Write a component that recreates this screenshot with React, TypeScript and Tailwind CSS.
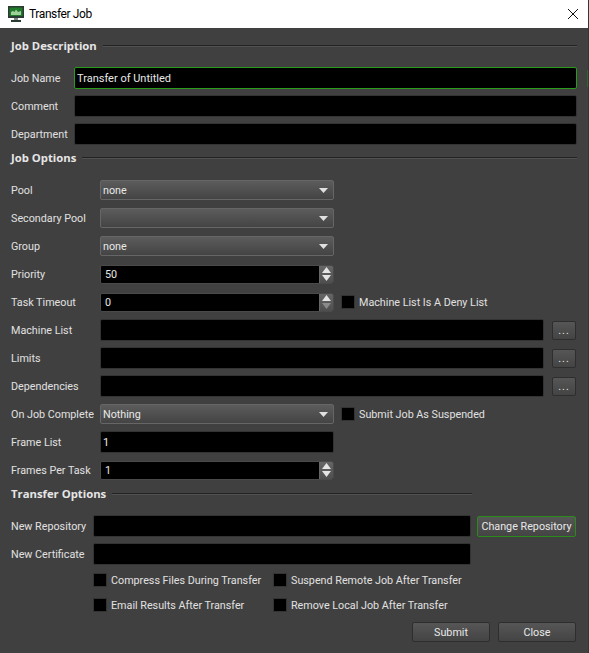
import React from "react";

function SectionHeading({ title, lineClass = "" }: { title: string; lineClass?: string }) {
  return (
    <div className="flex h-5 items-center">
      <span className="font-['Open_Sans',sans-serif] text-[11.3px] font-bold text-[#e6e6e6] whitespace-nowrap">{title}</span>
      <div className={`ml-[6px] h-[2px] border-t border-t-[#232323] border-b border-b-[#505050] ${lineClass || "flex-1"}`} />
    </div>
  );
}

function Row({ label, labelWidth, children }: { label: string; labelWidth: string; children: React.ReactNode }) {
  return (
    <div className="flex h-7 items-center">
      <div className={`shrink-0 pt-[2px] text-[#e0e0e0] ${labelWidth}`}>{label}</div>
      {children}
    </div>
  );
}

function TextBox({ value = "", focused = false, className = "flex-1" }: { value?: string; focused?: boolean; className?: string }) {
  return (
    <div
      className={`flex h-[22px] items-center rounded-[2px] border bg-black pl-[2px] pt-[2px] text-[11px] text-[#e8e8e8] ${
        focused ? "border-[#2a9a1a]" : "border-[#333333]"
      } ${className}`}
    >
      {value}
    </div>
  );
}

function Combo({ value = "", className = "w-[234px]" }: { value?: string; className?: string }) {
  return (
    <div
      className={`flex h-5 items-center justify-between rounded-[2px] border border-[#666666] bg-gradient-to-b from-[#5c5c5c] to-[#444444] pl-[2px] pr-[5px] text-[#e8e8e8] ${className}`}
    >
      <span className="pt-[2px]">{value}</span>
      <svg width="9" height="5" viewBox="0 0 9 5">
        <path d="M0 0h9L4.5 5z" fill="#e0e0e0" />
      </svg>
    </div>
  );
}

function Spin({ value, dimDown = false }: { value: string; dimDown?: boolean }) {
  return (
    <div className="flex h-[19px] w-[234px] overflow-hidden rounded-[2px] border border-[#4a4a4a] bg-black text-[#e8e8e8]">
      <div className="flex flex-1 items-center pl-[4px] pt-[2px]">{value}</div>
      <div className="flex w-[14px] flex-col items-center justify-center gap-[2px] border-l border-[#666666] bg-gradient-to-b from-[#666666] to-[#4e4e4e]">
        <svg width="9" height="6" viewBox="0 0 9 6">
          <path d="M4.5 0L9 6H0z" fill="#e4e4e4" />
        </svg>
        <svg width="9" height="6" viewBox="0 0 9 6">
          <path d="M0 0h9L4.5 6z" fill={dimDown ? "#8a8a8a" : "#e4e4e4"} />
        </svg>
      </div>
    </div>
  );
}

function Check({ label, className = "" }: { label: string; className?: string }) {
  return (
    <div className={`flex items-center ${className}`}>
      <div className="h-[14px] w-[14px] shrink-0 border border-[#333333] bg-black" />
      <span className="ml-[4px] whitespace-nowrap pt-[2px] text-[#e0e0e0]">{label}</span>
    </div>
  );
}

function DialogButton({ children, className = "", focused = false }: { children: React.ReactNode; className?: string; focused?: boolean }) {
  return (
    <div
      className={`flex items-center justify-center rounded-[2px] border bg-gradient-to-b from-[#565656] to-[#444444] pt-[2px] text-[#e8e8e8] ${
        focused ? "border-[#2a8a1a]" : "border-[#2e2e2e]"
      } ${className}`}
    >
      {children}
    </div>
  );
}

export default function App() {
  return (
    <div className="relative flex h-[653px] w-[589px] flex-col overflow-hidden border-r border-[#363636] bg-[#404040] font-['Roboto',sans-serif] text-[10.75px]">
      {/* sliver of the window behind, on the right edge */}
      <div className="absolute right-0 top-[70px] h-[17px] w-px bg-[#2a6a2a]" />

      {/* Title bar */}
      <div className="flex h-7 shrink-0 items-center bg-white pl-2 pr-[10px] text-black">
        <svg width="16" height="16" viewBox="0 0 16 16">
          <rect x="0" y="0" width="16" height="12" fill="#2b3a33" />
          <rect x="1.5" y="1.5" width="13" height="8.5" fill="#1f7a2a" />
          <path d="M3 9V6l2-1 1.5 1L8 3.5 10 6l3-1v4z" fill="#9fd09a" />
          <rect x="6" y="12" width="4" height="2" fill="#7d8a85" />
          <rect x="3" y="14" width="10" height="2" fill="#2b3a33" />
        </svg>
        <span className="ml-[5px] text-[12px] tracking-[-0.4px]">Transfer Job</span>
        <svg className="ml-auto" width="10" height="10" viewBox="0 0 10 10">
          <path d="M0 0l10 10M10 0L0 10" stroke="#111" strokeWidth="1" fill="none" />
        </svg>
      </div>

      {/* Form body */}
      <div className="flex flex-1 flex-col pl-[11px] pr-[11px] pt-2">
        <SectionHeading title="Job Description" />
        <div className="mt-2 flex flex-col">
          <Row label="Job Name" labelWidth="w-[63px]">
            <TextBox value="Transfer of Untitled" focused />
          </Row>
          <Row label="Comment" labelWidth="w-[63px]">
            <TextBox />
          </Row>
          <Row label="Department" labelWidth="w-[63px]">
            <TextBox />
          </Row>
        </div>

        <SectionHeading title="Job Options" />
        <div className="mt-2 flex flex-col">
          <Row label="Pool" labelWidth="w-[89px]">
            <Combo value="none" />
          </Row>
          <Row label="Secondary Pool" labelWidth="w-[89px]">
            <Combo />
          </Row>
          <Row label="Group" labelWidth="w-[89px]">
            <Combo value="none" />
          </Row>
          <Row label="Priority" labelWidth="w-[89px]">
            <Spin value="50" />
          </Row>
          <Row label="Task Timeout" labelWidth="w-[89px]">
            <Spin value="0" dimDown />
            <Check label="Machine List Is A Deny List" className="ml-[7px]" />
          </Row>
          <Row label="Machine List" labelWidth="w-[89px]">
            <TextBox />
            <DialogButton className="ml-[8px] mr-px h-[19px] w-[24px] tracking-[1px]">...</DialogButton>
          </Row>
          <Row label="Limits" labelWidth="w-[89px]">
            <TextBox />
            <DialogButton className="ml-[8px] mr-px h-[19px] w-[24px] tracking-[1px]">...</DialogButton>
          </Row>
          <Row label="Dependencies" labelWidth="w-[89px]">
            <TextBox />
            <DialogButton className="ml-[8px] mr-px h-[19px] w-[24px] tracking-[1px]">...</DialogButton>
          </Row>
          <Row label="On Job Complete" labelWidth="w-[89px]">
            <Combo value="Nothing" />
            <Check label="Submit Job As Suspended" className="ml-[7px]" />
          </Row>
          <Row label="Frame List" labelWidth="w-[89px]">
            <TextBox value="1" className="w-[234px]" />
          </Row>
          <Row label="Frames Per Task" labelWidth="w-[89px]">
            <Spin value="1" />
          </Row>
        </div>

        <SectionHeading title="Transfer Options" lineClass="w-[360px]" />
        <div className="mt-2 flex flex-col">
          <Row label="New Repository" labelWidth="w-[82px]">
            <TextBox />
            <DialogButton focused className="ml-[6px] mr-px h-[21px] w-[99px]">
              Change Repository
            </DialogButton>
          </Row>
          <Row label="New Certificate" labelWidth="w-[82px]">
            <TextBox className="w-[378px] flex-none" />
          </Row>
        </div>

        <div className="ml-[82px] flex flex-col">
          <div className="flex h-6 items-center">
            <Check label="Compress Files During Transfer" className="w-[180px]" />
            <Check label="Suspend Remote Job After Transfer" />
          </div>
          <div className="mt-px flex h-6 items-center">
            <Check label="Email Results After Transfer" className="w-[180px]" />
            <Check label="Remove Local Job After Transfer" />
          </div>
        </div>

        <div className="mr-px mt-[5px] flex justify-end gap-2">
          <DialogButton className="h-5 w-[78px]">Submit</DialogButton>
          <DialogButton className="h-5 w-[78px]">Close</DialogButton>
        </div>
      </div>
    </div>
  );
}
